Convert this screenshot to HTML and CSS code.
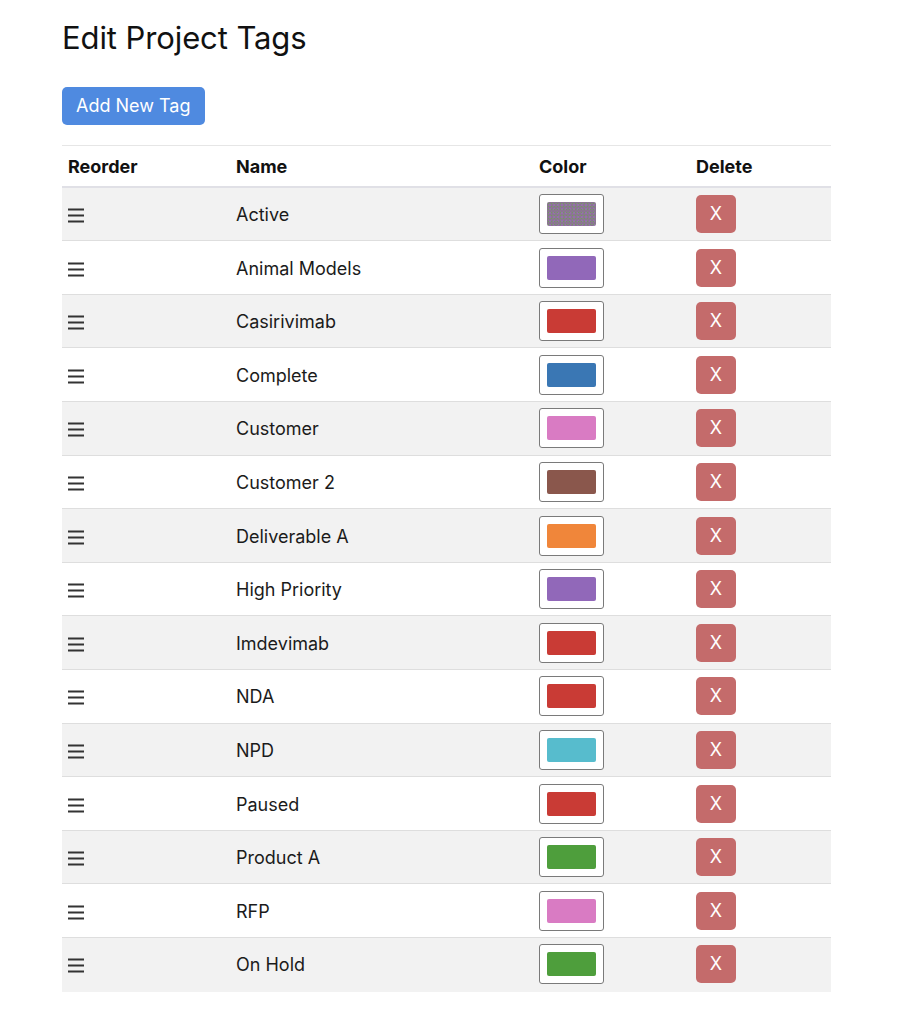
FILE: index.html
```html
<!DOCTYPE html>
<html lang="en">
<head>
<meta charset="utf-8">
<title>Edit Project Tags</title>
<link rel="stylesheet" href="styles.css">
</head>
<body>
<main class="page">
  <h2 class="title">Edit Project Tags</h2>
  <button class="btn-add" type="button">Add New Tag</button>
  <table class="tags">
    <colgroup>
      <col class="c-reorder"><col class="c-name"><col class="c-color"><col class="c-delete">
    </colgroup>
    <thead>
      <tr><th>Reorder</th><th>Name</th><th>Color</th><th>Delete</th></tr>
    </thead>
    <tbody>
      <tr><td><svg class="grip" viewBox="0 0 16 14"><path d="M0 1.5H16M0 7.5H16M0 13.5H16"/></svg></td><td>Active</td><td><span class="swatch-box"><span class="swatch sw-mixed"></span></span></td><td><button class="btn-del" type="button">X</button></td></tr>
      <tr><td><svg class="grip" viewBox="0 0 16 14"><path d="M0 1.5H16M0 7.5H16M0 13.5H16"/></svg></td><td>Animal Models</td><td><span class="swatch-box"><span class="swatch" style="background:#9168b9"></span></span></td><td><button class="btn-del" type="button">X</button></td></tr>
      <tr><td><svg class="grip" viewBox="0 0 16 14"><path d="M0 1.5H16M0 7.5H16M0 13.5H16"/></svg></td><td>Casirivimab</td><td><span class="swatch-box"><span class="swatch" style="background:#c93b35"></span></span></td><td><button class="btn-del" type="button">X</button></td></tr>
      <tr><td><svg class="grip" viewBox="0 0 16 14"><path d="M0 1.5H16M0 7.5H16M0 13.5H16"/></svg></td><td>Complete</td><td><span class="swatch-box"><span class="swatch" style="background:#3a77b4"></span></span></td><td><button class="btn-del" type="button">X</button></td></tr>
      <tr><td><svg class="grip" viewBox="0 0 16 14"><path d="M0 1.5H16M0 7.5H16M0 13.5H16"/></svg></td><td>Customer</td><td><span class="swatch-box"><span class="swatch" style="background:#d97bc3"></span></span></td><td><button class="btn-del" type="button">X</button></td></tr>
      <tr><td><svg class="grip" viewBox="0 0 16 14"><path d="M0 1.5H16M0 7.5H16M0 13.5H16"/></svg></td><td>Customer 2</td><td><span class="swatch-box"><span class="swatch" style="background:#8a574c"></span></span></td><td><button class="btn-del" type="button">X</button></td></tr>
      <tr><td><svg class="grip" viewBox="0 0 16 14"><path d="M0 1.5H16M0 7.5H16M0 13.5H16"/></svg></td><td>Deliverable A</td><td><span class="swatch-box"><span class="swatch" style="background:#f0863a"></span></span></td><td><button class="btn-del" type="button">X</button></td></tr>
      <tr><td><svg class="grip" viewBox="0 0 16 14"><path d="M0 1.5H16M0 7.5H16M0 13.5H16"/></svg></td><td>High Priority</td><td><span class="swatch-box"><span class="swatch" style="background:#9168b9"></span></span></td><td><button class="btn-del" type="button">X</button></td></tr>
      <tr><td><svg class="grip" viewBox="0 0 16 14"><path d="M0 1.5H16M0 7.5H16M0 13.5H16"/></svg></td><td>Imdevimab</td><td><span class="swatch-box"><span class="swatch" style="background:#c93b35"></span></span></td><td><button class="btn-del" type="button">X</button></td></tr>
      <tr><td><svg class="grip" viewBox="0 0 16 14"><path d="M0 1.5H16M0 7.5H16M0 13.5H16"/></svg></td><td>NDA</td><td><span class="swatch-box"><span class="swatch" style="background:#c93b35"></span></span></td><td><button class="btn-del" type="button">X</button></td></tr>
      <tr><td><svg class="grip" viewBox="0 0 16 14"><path d="M0 1.5H16M0 7.5H16M0 13.5H16"/></svg></td><td>NPD</td><td><span class="swatch-box"><span class="swatch" style="background:#57bccd"></span></span></td><td><button class="btn-del" type="button">X</button></td></tr>
      <tr><td><svg class="grip" viewBox="0 0 16 14"><path d="M0 1.5H16M0 7.5H16M0 13.5H16"/></svg></td><td>Paused</td><td><span class="swatch-box"><span class="swatch" style="background:#c93b35"></span></span></td><td><button class="btn-del" type="button">X</button></td></tr>
      <tr><td><svg class="grip" viewBox="0 0 16 14"><path d="M0 1.5H16M0 7.5H16M0 13.5H16"/></svg></td><td>Product A</td><td><span class="swatch-box"><span class="swatch" style="background:#4e9e3c"></span></span></td><td><button class="btn-del" type="button">X</button></td></tr>
      <tr><td><svg class="grip" viewBox="0 0 16 14"><path d="M0 1.5H16M0 7.5H16M0 13.5H16"/></svg></td><td>RFP</td><td><span class="swatch-box"><span class="swatch" style="background:#d97bc3"></span></span></td><td><button class="btn-del" type="button">X</button></td></tr>
      <tr><td><svg class="grip" viewBox="0 0 16 14"><path d="M0 1.5H16M0 7.5H16M0 13.5H16"/></svg></td><td>On Hold</td><td><span class="swatch-box"><span class="swatch" style="background:#4e9e3c"></span></span></td><td><button class="btn-del" type="button">X</button></td></tr>
    </tbody>
  </table>
</main>
</body>
</html>
```
FILE: styles.css
```css
* { box-sizing: border-box; }

html, body {
  margin: 0;
  padding: 0;
  background: #fff;
}

body {
  font-family: Inter, "Noto Sans", "Liberation Sans", sans-serif;
  font-size: 18px;
  line-height: 1.5;
  color: #212529;
}

.page {
  padding: 19px 0 0 62px;
  width: 831px;
}

.title {
  margin: 0 0 31px;
  font-size: 31px;
  font-weight: 400;
  line-height: 1.2;
  color: #111;
  letter-spacing: -0.1px;
}

.btn-add {
  display: block;
  height: 38px;
  padding: 0 14px;
  border: 0;
  border-radius: 5px;
  background: #4f8ae0;
  color: #fff;
  font-family: inherit;
  font-size: 18px;
  line-height: 38px;
  cursor: pointer;
}

.tags {
  margin-top: 20px;
  width: 769px;
  border-collapse: collapse;
  table-layout: fixed;
}

.c-reorder { width: 168px; }
.c-name { width: 303px; }
.c-color { width: 157px; }
.c-delete { width: 141px; }

.tags th {
  text-align: left;
  font-weight: 700;
  color: #111;
  padding: 8px 6px 6px 6px;
  height: 41px;
  line-height: 26px;
  border-top: 1px solid #e6e6e6;
  border-bottom: 2px solid #e0e0e6;
}

.tags td {
  padding: 2px 6px 0;
  height: 53.6px;
  line-height: 26px;
  vertical-align: middle;
  border-bottom: 1px solid #dedede;
  color: #1b1b1b;
}

.tags tbody tr:nth-child(odd) td {
  background: #f2f2f2;
}

.tags tbody tr:last-child td {
  border-bottom-color: #f2f2f2;
}

.grip {
  display: block;
  width: 16px;
  height: 14px;
  overflow: visible;
}

.grip path {
  stroke: #333;
  stroke-width: 1.8;
  fill: none;
}

.swatch-box {
  display: block;
  width: 65px;
  height: 40px;
  margin-top: -2px;
  padding: 7px;
  background: #fff;
  border: 1px solid #7a7a7a;
  border-radius: 3px;
}

.swatch {
  display: block;
  width: 100%;
  height: 100%;
  border-radius: 2px;
}

.sw-mixed {
  background-color: #8a7790;
  background-image:
    radial-gradient(circle, #6fa05a 0.6px, transparent 0.9px),
    radial-gradient(circle, #9a6fb8 0.6px, transparent 0.9px);
  background-size: 3px 3px, 4px 4px;
  background-position: 0 0, 1px 1px;
}

.btn-del {
  display: block;
  width: 40px;
  height: 38px;
  margin-top: -2px;
  padding: 0;
  border: 0;
  border-radius: 5px;
  background: #c46b6b;
  color: #fff;
  font-family: inherit;
  font-size: 18px;
  line-height: 38px;
  text-align: center;
  cursor: pointer;
}
```
